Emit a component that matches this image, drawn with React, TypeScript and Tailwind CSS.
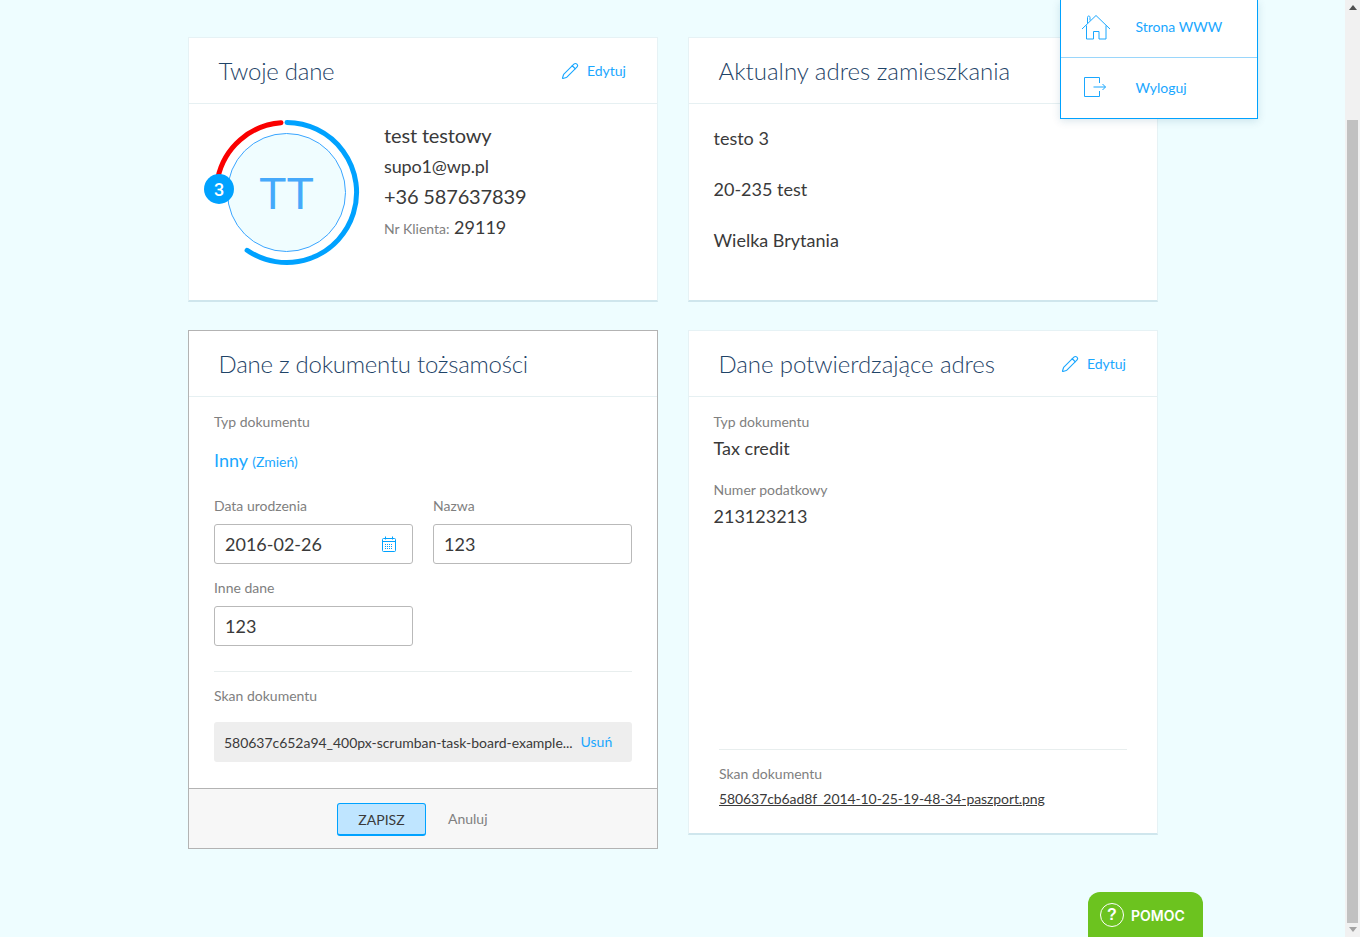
import { Pencil } from 'lucide-react'

function HomeIcon() {
  return (
    <svg width="30" height="26" viewBox="0 0 30 26" fill="none" stroke="#1aa7ff" strokeWidth="1">
      <path d="M1 15 15 1.500 29 15" />
      <path d="M5.500 11.500V25H12.500V17.500H18V25H25V11.500" />
      <path d="M6.500 9.500V3.500C6.500 1.500 9 1.500 9 3.500V6.500" />
    </svg>
  )
}

function LogoutIcon() {
  return (
    <svg width="24" height="20" viewBox="0 0 24 20" fill="none" stroke="#1aa7ff" strokeWidth="1">
      <path d="M16.500 6V.5H1.500V19.500H16.500V14" />
      <path d="M10.500 10H22.500M19.500 7 22.500 10 19.500 13" />
    </svg>
  )
}

function CalendarIcon() {
  return (
    <svg width="16" height="16" viewBox="0 0 16 16" fill="none" stroke="#00a2ff" strokeWidth="1">
      <rect x="1.500" y="2.500" width="13" height="13" rx="1" />
      <path d="M1.500 5.500H14.500M4.500 .5V3.500M11.500 .5V3.500" />
      <path d="M4 8.500H12M4 10.500H12M4 12.500H12" strokeDasharray="1 1" />
    </svg>
  )
}

function Avatar() {
  return (
    <div className="relative w-[151px] h-[149px] ml-[22px] flex items-center justify-center">
      <svg className="absolute left-0 top-0" width="151" height="149" viewBox="0 0 151 149" fill="none" strokeLinecap="round" strokeWidth="5">
        <path d="M76 4.500A70 70 0 1 1 36.100 132.300" stroke="#00a2ff" />
        <path d="M6.800 60A70 70 0 0 1 70 4.700" stroke="#fa0000" />
      </svg>
      <div className="w-[119px] h-[119px] pt-[2px] rounded-full bg-[#f0fdff] border border-[#3aa5ff] flex items-center justify-center text-[45px] leading-none text-[#46a9fb] font-['Liberation_Sans',sans-serif]">
        TT
      </div>
      <div className="absolute left-[-7px] top-[56px] w-[30px] h-[30px] rounded-full bg-[#00a2ff] text-white text-[18px] font-medium flex items-center justify-center font-['Roboto',sans-serif]">
        3
      </div>
    </div>
  )
}

function CardHeader({ title, edit, tracking }: { title: string; edit?: boolean; tracking: string }) {
  return (
    <div className="h-[66px] shrink-0 border-b border-[#e6f0f2] pl-[29.5px] pr-[31px] flex items-center justify-between">
      <h2 className={`text-[24px] font-light text-[#1f4468] ${tracking}`}>{title}</h2>
      {edit && (
        <a className="flex items-center gap-[8px] text-[14px] text-[#1aa7ff]">
          <Pencil size={18} strokeWidth={1.5} />
          Edytuj
        </a>
      )}
    </div>
  )
}

function Field({ label, value, icon }: { label: string; value: string; icon?: boolean }) {
  return (
    <div>
      <div className="text-[14px] leading-[20px] text-[#808080] mb-[8px]">{label}</div>
      <div className="h-[40px] w-[199px] border border-[#b9b9b9] rounded-[3px] px-[10px] flex items-center justify-between text-[18px]">
        {value}
        {icon && <span className="mr-[5px] flex"><CalendarIcon /></span>}
      </div>
    </div>
  )
}

export default function App() {
  return (
    <div className="relative h-[937px] overflow-hidden flex bg-[#eefdff] font-['Lato',sans-serif] text-[#3a3a3a]">
      <main className="flex-1 pt-[37px] pl-[188px]">
        <div className="w-[970px] grid grid-cols-2 gap-x-[30px] gap-y-[28px] items-start">
          {/* Twoje dane */}
          <section className="h-[265px] bg-white border border-[#e6f2f5] border-b-2 border-b-[#cfe6ed]">
            <CardHeader title="Twoje dane" edit tracking="tracking-[-0.24px]" />
            <div className="flex pt-[14px]">
              <Avatar />
              <div className="ml-[22px] pt-[2px]">
                <div className="text-[20px] leading-[30px] tracking-[-0.15px]">test testowy</div>
                <div className="text-[18px] leading-[30px] mt-[1px] tracking-[-0.15px]">supo1@wp.pl</div>
                <div className="text-[20px] leading-[30px] tracking-[-0.15px]">+36 587637839</div>
                <div className="text-[18px] leading-[32px]">
                  <span className="text-[14px] text-[#808080] mr-[1px]">Nr Klienta: </span>29119
                </div>
              </div>
            </div>
          </section>

          {/* Adres */}
          <section className="h-[265px] bg-white border border-[#e6f2f5] border-b-2 border-b-[#cfe6ed]">
            <CardHeader title="Aktualny adres zamieszkania" tracking="tracking-normal" />
            <div className="pl-[24.5px] pt-[9px] text-[18px] leading-[51px]">
              <div>testo 3</div>
              <div>20-235 test</div>
              <div>Wielka Brytania</div>
            </div>
          </section>

          {/* Dokument */}
          <section className="bg-white border border-[#b3b3b3]">
            <CardHeader title="Dane z dokumentu tożsamości" tracking="tracking-[-0.26px]" />
            <div className="px-[25px] pt-[15px]">
              <div className="text-[14px] leading-[20px] text-[#808080]">Typ dokumentu</div>
              <div className="mt-[14px] leading-[28px] text-[#1aa7ff] text-[18px]">
                Inny <span className="text-[14px]">(Zmień)</span>
              </div>
              <div className="grid grid-cols-[199px_199px] gap-x-[20px] gap-y-[14px] mt-[20px]">
                <Field label="Data urodzenia" value="2016-02-26" icon />
                <Field label="Nazwa" value="123" />
                <Field label="Inne dane" value="123" />
              </div>
              <div className="border-t border-[#e8eeee] mt-[25px] pt-[14px] text-[14px] leading-[20px] text-[#808080]">Skan dokumentu</div>
              <div className="mt-[16px] h-[40px] bg-[#eeeeee] rounded-[3px] pl-[10px] flex items-center text-[14px]">
                <span className="tracking-[-0.03px]">580637c652a94_400px-scrumban-task-board-example...</span>
                <a className="ml-[8px] mb-[2px] text-[#1aa7ff]">Usuń</a>
              </div>
            </div>
            <div className="mt-[26px] h-[60px] bg-[#f7f7f7] border-t border-[#b3b3b3] flex items-start pt-[14px] pl-[148px]">
              <button className="w-[89px] h-[33px] bg-[#bfe5ff] border border-[#00a2ff] border-b-2 rounded-[3px] text-[14px]">ZAPISZ</button>
              <a className="ml-[22px] mt-[6px] text-[14px] leading-[20px] text-[#808080]">Anuluj</a>
            </div>
          </section>

          {/* Potwierdzenie adresu */}
          <section className="bg-white border border-[#e6f2f5] border-b-2 border-b-[#cfe6ed]">
            <CardHeader title="Dane potwierdzające adres" edit tracking="tracking-[-0.08px]" />
            <div className="h-[352px] pl-[24.5px] pt-[15px]">
              <div className="text-[14px] leading-[20px] text-[#808080]">Typ dokumentu</div>
              <div className="text-[18px] leading-[28px] mt-[2px]">Tax credit</div>
              <div className="text-[14px] leading-[20px] text-[#808080] mt-[18px]">Numer podatkowy</div>
              <div className="text-[18px] leading-[28px] mt-[2px]">213123213</div>
            </div>
            <div className="mx-[30px] border-t border-[#e8eeee] pt-[14px] h-[84px]">
              <div className="text-[14px] leading-[20px] text-[#808080]">Skan dokumentu</div>
              <a className="inline-block mt-[5px] text-[14px] leading-[20px] underline tracking-[-0.09px]">580637cb6ad8f_2014-10-25-19-48-34-paszport.png</a>
            </div>
          </section>
        </div>
      </main>

      {/* Scrollbar */}
      <div className="w-[15px] shrink-0 bg-[#f1f1f1] flex flex-col items-center">
        <div className="mt-[5px] w-0 h-0 border-x-[4px] border-x-transparent border-b-[5px] border-b-[#505050]" />
        <div className="mt-[110px] w-[11px] h-[803px] bg-[#c1c1c1]" />
        <div className="mt-[4px] w-0 h-0 border-x-[4px] border-x-transparent border-t-[5px] border-t-[#a3a3a3]" />
      </div>

      {/* Menu */}
      <div className="absolute left-[1060px] top-0 w-[198px] h-[119px] bg-white border border-t-0 border-[#00a2ff] shadow-[0_2px_8px_rgba(0,80,120,0.15)] text-[14px] text-[#1aa7ff]">
        <div className="h-[58px] border-b border-[#9ad6fb] pb-[4px] flex items-center">
          <span className="w-[74.5px] pl-[20px] flex"><HomeIcon /></span>
          Strona WWW
        </div>
        <div className="h-[60px] pb-[2px] flex items-center">
          <span className="w-[74.5px] pl-[21.5px] flex"><LogoutIcon /></span>
          Wyloguj
        </div>
      </div>

      {/* Pomoc */}
      <div className="absolute left-[1088px] top-[892px] w-[115px] h-[45px] bg-[#6cc31f] rounded-t-[12px] pl-[12px] flex items-center gap-[7px] text-white text-[14px] font-semibold font-['Inter',sans-serif]">
        <span className="w-[24px] h-[24px] rounded-full border border-white flex items-center justify-center text-[16px] font-bold font-['Liberation_Sans',sans-serif]">?</span>
        <span className="mt-[2px]">POMOC</span>
      </div>
    </div>
  )
}
